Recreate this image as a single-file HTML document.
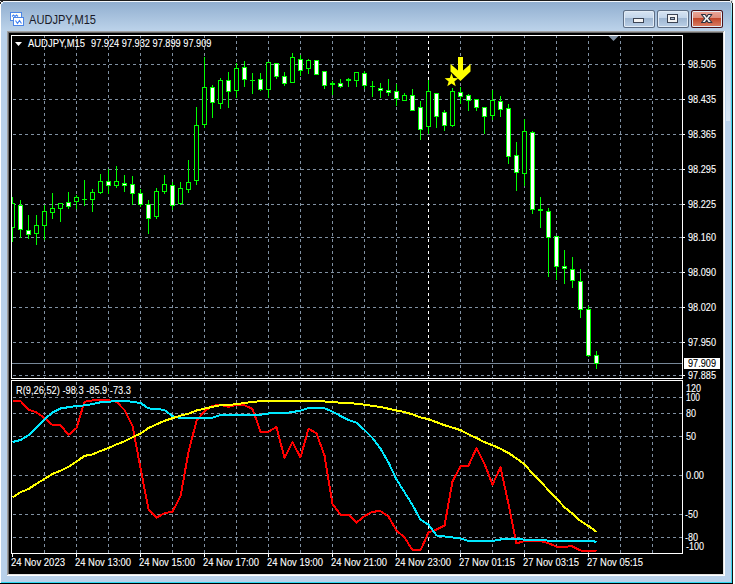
<!DOCTYPE html><html><head><meta charset="utf-8"><style>html,body{margin:0;padding:0;background:#fff;}body{width:735px;height:584px;overflow:hidden;font-family:"Liberation Sans",sans-serif;}svg{display:block;}</style></head><body><svg width="735" height="584" viewBox="0 0 735 584" shape-rendering="crispEdges">
<defs><linearGradient id="tg" x1="0" y1="0" x2="0" y2="1"><stop offset="0" stop-color="#8eacce"/><stop offset="1" stop-color="#bcd3ea"/></linearGradient><linearGradient id="bt" x1="0" y1="0" x2="0" y2="1"><stop offset="0" stop-color="#d4e2f1"/><stop offset="0.45" stop-color="#c2d5ea"/><stop offset="0.46" stop-color="#9eb6d1"/><stop offset="1" stop-color="#b8cde4"/></linearGradient><linearGradient id="ct" x1="0" y1="0" x2="0" y2="1"><stop offset="0" stop-color="#eaa496"/><stop offset="0.45" stop-color="#dc8a78"/><stop offset="0.46" stop-color="#c0462a"/><stop offset="1" stop-color="#d87a60"/></linearGradient><linearGradient id="rs" x1="0" y1="0" x2="0" y2="1"><stop offset="0" stop-color="#bcd3ea"/><stop offset="1" stop-color="#d8e6f4"/></linearGradient><linearGradient id="cg" x1="0" y1="0" x2="0" y2="1"><stop offset="0" stop-color="#c4ecf6"/><stop offset="1" stop-color="#3ed4ee"/></linearGradient><clipPath id="mc"><rect x="12" y="36" width="670" height="342"/></clipPath><clipPath id="ic"><rect x="12" y="381" width="670" height="172"/></clipPath></defs>
<rect x="0" y="0" width="735" height="584" fill="#ffffff"/>
<rect x="0" y="0" width="733" height="584" fill="#b9d1ea"/>
<rect x="0" y="0" width="733" height="31" fill="url(#tg)"/>
<rect x="3" y="0" width="727" height="1" fill="#1c1c1c"/>
<rect x="732" y="3" width="1" height="581" fill="#111111"/>
<rect x="0" y="583" width="733" height="1" fill="#000000"/>
<rect x="3" y="1" width="727" height="1" fill="#f4f8fc"/>
<rect x="0" y="4" width="1" height="579" fill="#ffffff"/>
<rect x="731" y="3" width="1" height="580" fill="#3ed4ee"/>
<rect x="731" y="3" width="1" height="24" fill="url(#cg)"/>
<rect x="1" y="582" width="731" height="1" fill="#2ed8f2"/>
<rect x="0" y="0" width="3" height="4" fill="#b9d1ea"/>
<rect x="0" y="0" width="3" height="1" fill="#1c1c1c"/>
<rect x="0" y="1" width="1" height="1" fill="#e6e6e6"/>
<rect x="0" y="2" width="1" height="2" fill="#2a2a2a"/>
<rect x="1" y="1" width="2" height="1" fill="#2a2a2a"/>
<rect x="1" y="2" width="2" height="1" fill="#f0f4f8"/>
<rect x="1" y="3" width="1" height="1" fill="#f0f4f8"/>
<rect x="730" y="0" width="3" height="3" fill="#e0e0e0"/>
<rect x="731" y="1" width="1" height="2" fill="#5a6a70"/>
<rect x="726" y="31" width="4" height="90" fill="url(#rs)"/>
<rect x="7" y="31" width="718" height="1" fill="#a0a0a0"/>
<rect x="7" y="31" width="1" height="545" fill="#a0a0a0"/>
<rect x="8" y="32" width="716" height="1" fill="#696969"/>
<rect x="8" y="32" width="1" height="543" fill="#696969"/>
<rect x="7" y="575" width="718" height="1" fill="#ffffff"/>
<rect x="724" y="31" width="1" height="545" fill="#ffffff"/>
<rect x="8" y="574" width="716" height="1" fill="#e3e3e3"/>
<rect x="723" y="32" width="1" height="543" fill="#e3e3e3"/>
<rect x="9" y="33" width="714" height="541" fill="#000000"/>
<g shape-rendering="auto">
<rect x="10.5" y="12.5" width="11" height="8" fill="#fffef6" stroke="#5a8cd8" stroke-width="1"/>
<rect x="10.5" y="12.5" width="11" height="8" fill="none" stroke="#3f80f4" stroke-width="1" stroke-dasharray="1 1"/>
<polyline points="12,16.5 13.5,15 15,16.5 16.5,15 18,16.5" fill="none" stroke="#3f80f4" stroke-width="1.1"/>
<rect x="13.5" y="17.5" width="10" height="8" fill="#ffffff" stroke="#5a8cd8" stroke-width="1"/>
<rect x="13.5" y="17.5" width="10" height="8" fill="none" stroke="#3f80f4" stroke-width="1" stroke-dasharray="1 1"/>
<polyline points="15.5,20.5 17.5,23.5 19.5,20.5 21.5,23.5" fill="none" stroke="#3f80f4" stroke-width="1.1"/>
</g>
<text x="29" y="24" font-family="Liberation Sans" font-size="12.2" fill="#1a1a28" textLength="67" lengthAdjust="spacingAndGlyphs">AUDJPY,M15</text>
<rect x="623" y="10" width="32" height="18" rx="2.5" fill="#5d6e85" shape-rendering="auto"/>
<rect x="624" y="11" width="30" height="16" rx="1.5" fill="#e2ecf6" shape-rendering="auto"/>
<rect x="625" y="12" width="28" height="14" fill="url(#bt)"/>
<rect x="657" y="10" width="32" height="18" rx="2.5" fill="#5d6e85" shape-rendering="auto"/>
<rect x="658" y="11" width="30" height="16" rx="1.5" fill="#e2ecf6" shape-rendering="auto"/>
<rect x="659" y="12" width="28" height="14" fill="url(#bt)"/>
<rect x="691" y="10" width="32" height="18" rx="2.5" fill="#4a1018" shape-rendering="auto"/>
<rect x="692" y="11" width="30" height="16" rx="1.5" fill="#e2ecf6" shape-rendering="auto"/>
<rect x="693" y="12" width="28" height="14" fill="url(#ct)"/>
<rect x="633" y="18" width="11" height="5" fill="#3c4454"/>
<rect x="634" y="19" width="9" height="3" fill="#f4f4f4"/>
<rect x="667" y="14" width="11" height="9" fill="#3c4454"/>
<rect x="668" y="15" width="9" height="7" fill="#f4f4f4"/>
<rect x="670" y="17" width="5" height="3" fill="#3c4454"/>
<rect x="671" y="18" width="3" height="1" fill="#a9b8cc"/>
<polygon shape-rendering="auto" points="701.5,14.5 705.2,14.5 706.7,16.9 708.2,14.5 711.9,14.5 708.6,18.5 711.9,22.5 708.2,22.5 706.7,20.1 705.2,22.5 701.5,22.5 704.8,18.5" fill="#f6f6f6" stroke="#2c3442" stroke-width="1.1" stroke-linejoin="round"/>
<line x1="13" y1="64.5" x2="682" y2="64.5" stroke="#8090a2" stroke-width="1" stroke-dasharray="3 3"/>
<line x1="13" y1="99.5" x2="682" y2="99.5" stroke="#8090a2" stroke-width="1" stroke-dasharray="3 3"/>
<line x1="13" y1="134.5" x2="682" y2="134.5" stroke="#8090a2" stroke-width="1" stroke-dasharray="3 3"/>
<line x1="13" y1="169.5" x2="682" y2="169.5" stroke="#8090a2" stroke-width="1" stroke-dasharray="3 3"/>
<line x1="13" y1="204.5" x2="682" y2="204.5" stroke="#8090a2" stroke-width="1" stroke-dasharray="3 3"/>
<line x1="13" y1="237.5" x2="682" y2="237.5" stroke="#8090a2" stroke-width="1" stroke-dasharray="3 3"/>
<line x1="13" y1="272.5" x2="682" y2="272.5" stroke="#8090a2" stroke-width="1" stroke-dasharray="3 3"/>
<line x1="13" y1="307.5" x2="682" y2="307.5" stroke="#8090a2" stroke-width="1" stroke-dasharray="3 3"/>
<line x1="13" y1="342.5" x2="682" y2="342.5" stroke="#8090a2" stroke-width="1" stroke-dasharray="3 3"/>
<line x1="13" y1="375.5" x2="682" y2="375.5" stroke="#8090a2" stroke-width="1" stroke-dasharray="3 3"/>
<line x1="44.5" y1="35" x2="44.5" y2="378" stroke="#8090a2" stroke-width="1" stroke-dasharray="3 3"/>
<line x1="76.5" y1="35" x2="76.5" y2="378" stroke="#8090a2" stroke-width="1" stroke-dasharray="3 3"/>
<line x1="108.5" y1="35" x2="108.5" y2="378" stroke="#8090a2" stroke-width="1" stroke-dasharray="3 3"/>
<line x1="140.5" y1="35" x2="140.5" y2="378" stroke="#8090a2" stroke-width="1" stroke-dasharray="3 3"/>
<line x1="172.5" y1="35" x2="172.5" y2="378" stroke="#8090a2" stroke-width="1" stroke-dasharray="3 3"/>
<line x1="204.5" y1="35" x2="204.5" y2="378" stroke="#8090a2" stroke-width="1" stroke-dasharray="3 3"/>
<line x1="236.5" y1="35" x2="236.5" y2="378" stroke="#8090a2" stroke-width="1" stroke-dasharray="3 3"/>
<line x1="268.5" y1="35" x2="268.5" y2="378" stroke="#8090a2" stroke-width="1" stroke-dasharray="3 3"/>
<line x1="300.5" y1="35" x2="300.5" y2="378" stroke="#8090a2" stroke-width="1" stroke-dasharray="3 3"/>
<line x1="332.5" y1="35" x2="332.5" y2="378" stroke="#8090a2" stroke-width="1" stroke-dasharray="3 3"/>
<line x1="364.5" y1="35" x2="364.5" y2="378" stroke="#8090a2" stroke-width="1" stroke-dasharray="3 3"/>
<line x1="396.5" y1="35" x2="396.5" y2="378" stroke="#8090a2" stroke-width="1" stroke-dasharray="3 3"/>
<line x1="428.5" y1="35" x2="428.5" y2="378" stroke="#ffffff" stroke-width="1" stroke-dasharray="3 3"/>
<line x1="460.5" y1="35" x2="460.5" y2="378" stroke="#8090a2" stroke-width="1" stroke-dasharray="3 3"/>
<line x1="492.5" y1="35" x2="492.5" y2="378" stroke="#8090a2" stroke-width="1" stroke-dasharray="3 3"/>
<line x1="524.5" y1="35" x2="524.5" y2="378" stroke="#8090a2" stroke-width="1" stroke-dasharray="3 3"/>
<line x1="556.5" y1="35" x2="556.5" y2="378" stroke="#8090a2" stroke-width="1" stroke-dasharray="3 3"/>
<line x1="588.5" y1="35" x2="588.5" y2="378" stroke="#8090a2" stroke-width="1" stroke-dasharray="3 3"/>
<line x1="620.5" y1="35" x2="620.5" y2="378" stroke="#8090a2" stroke-width="1" stroke-dasharray="3 3"/>
<line x1="652.5" y1="35" x2="652.5" y2="378" stroke="#8090a2" stroke-width="1" stroke-dasharray="3 3"/>
<polygon points="608.5,36 618.5,36 613.5,41" fill="#8090a2" shape-rendering="auto"/>
<rect x="12" y="363" width="670" height="1" fill="#778899"/>
<g clip-path="url(#mc)">
<rect x="12" y="197" width="1" height="45" fill="#00ff00"/>
<rect x="10" y="203" width="5" height="25" fill="#00ff00"/>
<rect x="11" y="204" width="3" height="23" fill="#000000"/>
<rect x="20" y="200" width="1" height="38" fill="#00ff00"/>
<rect x="18" y="205" width="5" height="25" fill="#00ff00"/>
<rect x="19" y="206" width="3" height="23" fill="#ffffff"/>
<rect x="28" y="215" width="1" height="24" fill="#00ff00"/>
<rect x="26" y="230" width="5" height="5" fill="#00ff00"/>
<rect x="27" y="231" width="3" height="3" fill="#ffffff"/>
<rect x="36" y="215" width="1" height="30" fill="#00ff00"/>
<rect x="34" y="225" width="5" height="9" fill="#00ff00"/>
<rect x="35" y="226" width="3" height="7" fill="#000000"/>
<rect x="44" y="205" width="1" height="35" fill="#00ff00"/>
<rect x="42" y="211" width="5" height="15" fill="#00ff00"/>
<rect x="43" y="212" width="3" height="13" fill="#000000"/>
<rect x="52" y="193" width="1" height="26" fill="#00ff00"/>
<rect x="50" y="208" width="5" height="5" fill="#00ff00"/>
<rect x="51" y="209" width="3" height="3" fill="#000000"/>
<rect x="60" y="203" width="1" height="19" fill="#00ff00"/>
<rect x="58" y="203" width="5" height="6" fill="#00ff00"/>
<rect x="59" y="204" width="3" height="4" fill="#000000"/>
<rect x="68" y="192" width="1" height="17" fill="#00ff00"/>
<rect x="66" y="202" width="5" height="5" fill="#00ff00"/>
<rect x="67" y="203" width="3" height="3" fill="#ffffff"/>
<rect x="76" y="195" width="1" height="14" fill="#00ff00"/>
<rect x="74" y="197" width="5" height="5" fill="#00ff00"/>
<rect x="75" y="198" width="3" height="3" fill="#000000"/>
<rect x="84" y="180" width="1" height="26" fill="#00ff00"/>
<rect x="82" y="199" width="5" height="1" fill="#00ff00"/>
<rect x="92" y="189" width="1" height="23" fill="#00ff00"/>
<rect x="90" y="192" width="5" height="8" fill="#00ff00"/>
<rect x="91" y="193" width="3" height="6" fill="#000000"/>
<rect x="100" y="174" width="1" height="20" fill="#00ff00"/>
<rect x="98" y="181" width="5" height="12" fill="#00ff00"/>
<rect x="99" y="182" width="3" height="10" fill="#000000"/>
<rect x="108" y="169" width="1" height="25" fill="#00ff00"/>
<rect x="106" y="181" width="5" height="5" fill="#00ff00"/>
<rect x="107" y="182" width="3" height="3" fill="#ffffff"/>
<rect x="116" y="166" width="1" height="22" fill="#00ff00"/>
<rect x="114" y="181" width="5" height="5" fill="#00ff00"/>
<rect x="115" y="182" width="3" height="3" fill="#000000"/>
<rect x="124" y="175" width="1" height="17" fill="#00ff00"/>
<rect x="122" y="183" width="5" height="3" fill="#00ff00"/>
<rect x="123" y="184" width="3" height="1" fill="#ffffff"/>
<rect x="132" y="176" width="1" height="29" fill="#00ff00"/>
<rect x="130" y="184" width="5" height="10" fill="#00ff00"/>
<rect x="131" y="185" width="3" height="8" fill="#ffffff"/>
<rect x="140" y="189" width="1" height="18" fill="#00ff00"/>
<rect x="138" y="193" width="5" height="12" fill="#00ff00"/>
<rect x="139" y="194" width="3" height="10" fill="#ffffff"/>
<rect x="148" y="200" width="1" height="34" fill="#00ff00"/>
<rect x="146" y="204" width="5" height="15" fill="#00ff00"/>
<rect x="147" y="205" width="3" height="13" fill="#ffffff"/>
<rect x="156" y="188" width="1" height="31" fill="#00ff00"/>
<rect x="154" y="191" width="5" height="26" fill="#00ff00"/>
<rect x="155" y="192" width="3" height="24" fill="#000000"/>
<rect x="164" y="175" width="1" height="19" fill="#00ff00"/>
<rect x="162" y="184" width="5" height="8" fill="#00ff00"/>
<rect x="163" y="185" width="3" height="6" fill="#000000"/>
<rect x="172" y="182" width="1" height="28" fill="#00ff00"/>
<rect x="170" y="185" width="5" height="21" fill="#00ff00"/>
<rect x="171" y="186" width="3" height="19" fill="#ffffff"/>
<rect x="180" y="182" width="1" height="23" fill="#00ff00"/>
<rect x="178" y="188" width="5" height="16" fill="#00ff00"/>
<rect x="179" y="189" width="3" height="14" fill="#000000"/>
<rect x="188" y="160" width="1" height="33" fill="#00ff00"/>
<rect x="186" y="182" width="5" height="8" fill="#00ff00"/>
<rect x="187" y="183" width="3" height="6" fill="#000000"/>
<rect x="196" y="107" width="1" height="78" fill="#00ff00"/>
<rect x="194" y="125" width="5" height="56" fill="#00ff00"/>
<rect x="195" y="126" width="3" height="54" fill="#000000"/>
<rect x="204" y="57" width="1" height="71" fill="#00ff00"/>
<rect x="202" y="87" width="5" height="38" fill="#00ff00"/>
<rect x="203" y="88" width="3" height="36" fill="#000000"/>
<rect x="212" y="85" width="1" height="33" fill="#00ff00"/>
<rect x="210" y="87" width="5" height="16" fill="#00ff00"/>
<rect x="211" y="88" width="3" height="14" fill="#ffffff"/>
<rect x="220" y="78" width="1" height="31" fill="#00ff00"/>
<rect x="218" y="80" width="5" height="24" fill="#00ff00"/>
<rect x="219" y="81" width="3" height="22" fill="#000000"/>
<rect x="228" y="72" width="1" height="36" fill="#00ff00"/>
<rect x="226" y="80" width="5" height="12" fill="#00ff00"/>
<rect x="227" y="81" width="3" height="10" fill="#ffffff"/>
<rect x="236" y="63" width="1" height="35" fill="#00ff00"/>
<rect x="234" y="68" width="5" height="23" fill="#00ff00"/>
<rect x="235" y="69" width="3" height="21" fill="#000000"/>
<rect x="244" y="61" width="1" height="26" fill="#00ff00"/>
<rect x="242" y="67" width="5" height="13" fill="#00ff00"/>
<rect x="243" y="68" width="3" height="11" fill="#ffffff"/>
<rect x="252" y="73" width="1" height="21" fill="#00ff00"/>
<rect x="250" y="80" width="5" height="1" fill="#00ff00"/>
<rect x="260" y="73" width="1" height="18" fill="#00ff00"/>
<rect x="258" y="79" width="5" height="11" fill="#00ff00"/>
<rect x="259" y="80" width="3" height="9" fill="#ffffff"/>
<rect x="268" y="62" width="1" height="36" fill="#00ff00"/>
<rect x="266" y="62" width="5" height="28" fill="#00ff00"/>
<rect x="267" y="63" width="3" height="26" fill="#000000"/>
<rect x="276" y="63" width="1" height="16" fill="#00ff00"/>
<rect x="274" y="63" width="5" height="14" fill="#00ff00"/>
<rect x="275" y="64" width="3" height="12" fill="#ffffff"/>
<rect x="284" y="72" width="1" height="14" fill="#00ff00"/>
<rect x="282" y="76" width="5" height="8" fill="#00ff00"/>
<rect x="283" y="77" width="3" height="6" fill="#ffffff"/>
<rect x="292" y="53" width="1" height="30" fill="#00ff00"/>
<rect x="290" y="57" width="5" height="26" fill="#00ff00"/>
<rect x="291" y="58" width="3" height="24" fill="#000000"/>
<rect x="300" y="55" width="1" height="21" fill="#00ff00"/>
<rect x="298" y="59" width="5" height="12" fill="#00ff00"/>
<rect x="299" y="60" width="3" height="10" fill="#ffffff"/>
<rect x="308" y="59" width="1" height="15" fill="#00ff00"/>
<rect x="306" y="60" width="5" height="9" fill="#00ff00"/>
<rect x="307" y="61" width="3" height="7" fill="#000000"/>
<rect x="316" y="60" width="1" height="15" fill="#00ff00"/>
<rect x="314" y="60" width="5" height="15" fill="#00ff00"/>
<rect x="315" y="61" width="3" height="13" fill="#ffffff"/>
<rect x="324" y="71" width="1" height="18" fill="#00ff00"/>
<rect x="322" y="71" width="5" height="15" fill="#00ff00"/>
<rect x="323" y="72" width="3" height="13" fill="#ffffff"/>
<rect x="332" y="81" width="1" height="14" fill="#00ff00"/>
<rect x="330" y="83" width="5" height="2" fill="#00ff00"/>
<rect x="340" y="79" width="1" height="9" fill="#00ff00"/>
<rect x="338" y="83" width="5" height="4" fill="#00ff00"/>
<rect x="339" y="84" width="3" height="2" fill="#ffffff"/>
<rect x="348" y="78" width="1" height="9" fill="#00ff00"/>
<rect x="346" y="79" width="5" height="2" fill="#00ff00"/>
<rect x="356" y="72" width="1" height="15" fill="#00ff00"/>
<rect x="354" y="72" width="5" height="9" fill="#00ff00"/>
<rect x="355" y="73" width="3" height="7" fill="#000000"/>
<rect x="364" y="71" width="1" height="18" fill="#00ff00"/>
<rect x="362" y="73" width="5" height="13" fill="#00ff00"/>
<rect x="363" y="74" width="3" height="11" fill="#ffffff"/>
<rect x="372" y="81" width="1" height="16" fill="#00ff00"/>
<rect x="370" y="86" width="5" height="1" fill="#00ff00"/>
<rect x="380" y="83" width="1" height="15" fill="#00ff00"/>
<rect x="378" y="88" width="5" height="3" fill="#00ff00"/>
<rect x="379" y="89" width="3" height="1" fill="#ffffff"/>
<rect x="388" y="79" width="1" height="17" fill="#00ff00"/>
<rect x="386" y="90" width="5" height="3" fill="#00ff00"/>
<rect x="387" y="91" width="3" height="1" fill="#ffffff"/>
<rect x="396" y="84" width="1" height="22" fill="#00ff00"/>
<rect x="394" y="91" width="5" height="8" fill="#00ff00"/>
<rect x="395" y="92" width="3" height="6" fill="#ffffff"/>
<rect x="404" y="93" width="1" height="8" fill="#00ff00"/>
<rect x="402" y="95" width="5" height="6" fill="#00ff00"/>
<rect x="403" y="96" width="3" height="4" fill="#000000"/>
<rect x="412" y="89" width="1" height="22" fill="#00ff00"/>
<rect x="410" y="95" width="5" height="16" fill="#00ff00"/>
<rect x="411" y="96" width="3" height="14" fill="#ffffff"/>
<rect x="420" y="101" width="1" height="39" fill="#00ff00"/>
<rect x="418" y="107" width="5" height="23" fill="#00ff00"/>
<rect x="419" y="108" width="3" height="21" fill="#ffffff"/>
<rect x="428" y="80" width="1" height="54" fill="#00ff00"/>
<rect x="426" y="91" width="5" height="36" fill="#00ff00"/>
<rect x="427" y="92" width="3" height="34" fill="#000000"/>
<rect x="436" y="93" width="1" height="35" fill="#00ff00"/>
<rect x="434" y="93" width="5" height="24" fill="#00ff00"/>
<rect x="435" y="94" width="3" height="22" fill="#ffffff"/>
<rect x="444" y="110" width="1" height="21" fill="#00ff00"/>
<rect x="442" y="112" width="5" height="14" fill="#00ff00"/>
<rect x="443" y="113" width="3" height="12" fill="#ffffff"/>
<rect x="452" y="88" width="1" height="39" fill="#00ff00"/>
<rect x="450" y="91" width="5" height="35" fill="#00ff00"/>
<rect x="451" y="92" width="3" height="33" fill="#000000"/>
<rect x="460" y="87" width="1" height="17" fill="#00ff00"/>
<rect x="458" y="92" width="5" height="5" fill="#00ff00"/>
<rect x="459" y="93" width="3" height="3" fill="#ffffff"/>
<rect x="468" y="94" width="1" height="17" fill="#00ff00"/>
<rect x="466" y="95" width="5" height="6" fill="#00ff00"/>
<rect x="467" y="96" width="3" height="4" fill="#ffffff"/>
<rect x="476" y="99" width="1" height="12" fill="#00ff00"/>
<rect x="474" y="99" width="5" height="9" fill="#00ff00"/>
<rect x="475" y="100" width="3" height="7" fill="#ffffff"/>
<rect x="484" y="107" width="1" height="27" fill="#00ff00"/>
<rect x="482" y="107" width="5" height="10" fill="#00ff00"/>
<rect x="483" y="108" width="3" height="8" fill="#ffffff"/>
<rect x="492" y="90" width="1" height="30" fill="#00ff00"/>
<rect x="490" y="100" width="5" height="16" fill="#00ff00"/>
<rect x="491" y="101" width="3" height="14" fill="#000000"/>
<rect x="500" y="96" width="1" height="21" fill="#00ff00"/>
<rect x="498" y="101" width="5" height="9" fill="#00ff00"/>
<rect x="499" y="102" width="3" height="7" fill="#ffffff"/>
<rect x="508" y="104" width="1" height="60" fill="#00ff00"/>
<rect x="506" y="108" width="5" height="49" fill="#00ff00"/>
<rect x="507" y="109" width="3" height="47" fill="#ffffff"/>
<rect x="516" y="142" width="1" height="49" fill="#00ff00"/>
<rect x="514" y="155" width="5" height="18" fill="#00ff00"/>
<rect x="515" y="156" width="3" height="16" fill="#ffffff"/>
<rect x="524" y="119" width="1" height="67" fill="#00ff00"/>
<rect x="522" y="131" width="5" height="43" fill="#00ff00"/>
<rect x="523" y="132" width="3" height="41" fill="#000000"/>
<rect x="532" y="131" width="1" height="83" fill="#00ff00"/>
<rect x="530" y="132" width="5" height="78" fill="#00ff00"/>
<rect x="531" y="133" width="3" height="76" fill="#ffffff"/>
<rect x="540" y="197" width="1" height="31" fill="#00ff00"/>
<rect x="538" y="209" width="5" height="2" fill="#00ff00"/>
<rect x="548" y="208" width="1" height="69" fill="#00ff00"/>
<rect x="546" y="211" width="5" height="27" fill="#00ff00"/>
<rect x="547" y="212" width="3" height="25" fill="#ffffff"/>
<rect x="556" y="236" width="1" height="44" fill="#00ff00"/>
<rect x="554" y="236" width="5" height="31" fill="#00ff00"/>
<rect x="555" y="237" width="3" height="29" fill="#ffffff"/>
<rect x="564" y="250" width="1" height="34" fill="#00ff00"/>
<rect x="562" y="266" width="5" height="3" fill="#00ff00"/>
<rect x="563" y="267" width="3" height="1" fill="#ffffff"/>
<rect x="572" y="257" width="1" height="31" fill="#00ff00"/>
<rect x="570" y="269" width="5" height="12" fill="#00ff00"/>
<rect x="571" y="270" width="3" height="10" fill="#ffffff"/>
<rect x="580" y="269" width="1" height="49" fill="#00ff00"/>
<rect x="578" y="281" width="5" height="29" fill="#00ff00"/>
<rect x="579" y="282" width="3" height="27" fill="#ffffff"/>
<rect x="588" y="306" width="1" height="51" fill="#00ff00"/>
<rect x="586" y="309" width="5" height="47" fill="#00ff00"/>
<rect x="587" y="310" width="3" height="45" fill="#ffffff"/>
<rect x="596" y="351" width="1" height="18" fill="#00ff00"/>
<rect x="594" y="355" width="5" height="9" fill="#00ff00"/>
<rect x="595" y="356" width="3" height="7" fill="#ffffff"/>
</g>
<g shape-rendering="auto">
<polygon points="451.50,73.30 453.26,78.07 458.35,78.28 454.35,81.43 455.73,86.32 451.50,83.50 447.27,86.32 448.65,81.43 444.65,78.28 449.74,78.07" fill="#ffff00"/>
<polygon points="458,57 463,57 463,70.5 470.5,64 470.5,71.5 460.5,81 450.5,71.5 450.5,64 458,70.5" fill="#ffff00"/>
</g>
<rect x="11.5" y="35.5" width="671" height="343" fill="none" stroke="#ffffff" stroke-width="1"/>
<rect x="683" y="64" width="2" height="1" fill="#ffffff"/>
<text x="688" y="68" font-family="Liberation Sans" font-size="10.1" fill="#ffffff" stroke="#ffffff" stroke-width="0.1" textLength="28" lengthAdjust="spacingAndGlyphs">98.505</text>
<rect x="683" y="99" width="2" height="1" fill="#ffffff"/>
<text x="688" y="103" font-family="Liberation Sans" font-size="10.1" fill="#ffffff" stroke="#ffffff" stroke-width="0.1" textLength="28" lengthAdjust="spacingAndGlyphs">98.435</text>
<rect x="683" y="134" width="2" height="1" fill="#ffffff"/>
<text x="688" y="138" font-family="Liberation Sans" font-size="10.1" fill="#ffffff" stroke="#ffffff" stroke-width="0.1" textLength="28" lengthAdjust="spacingAndGlyphs">98.365</text>
<rect x="683" y="169" width="2" height="1" fill="#ffffff"/>
<text x="688" y="173" font-family="Liberation Sans" font-size="10.1" fill="#ffffff" stroke="#ffffff" stroke-width="0.1" textLength="28" lengthAdjust="spacingAndGlyphs">98.295</text>
<rect x="683" y="204" width="2" height="1" fill="#ffffff"/>
<text x="688" y="208" font-family="Liberation Sans" font-size="10.1" fill="#ffffff" stroke="#ffffff" stroke-width="0.1" textLength="28" lengthAdjust="spacingAndGlyphs">98.225</text>
<rect x="683" y="237" width="2" height="1" fill="#ffffff"/>
<text x="688" y="241" font-family="Liberation Sans" font-size="10.1" fill="#ffffff" stroke="#ffffff" stroke-width="0.1" textLength="28" lengthAdjust="spacingAndGlyphs">98.160</text>
<rect x="683" y="272" width="2" height="1" fill="#ffffff"/>
<text x="688" y="276" font-family="Liberation Sans" font-size="10.1" fill="#ffffff" stroke="#ffffff" stroke-width="0.1" textLength="28" lengthAdjust="spacingAndGlyphs">98.090</text>
<rect x="683" y="307" width="2" height="1" fill="#ffffff"/>
<text x="688" y="311" font-family="Liberation Sans" font-size="10.1" fill="#ffffff" stroke="#ffffff" stroke-width="0.1" textLength="28" lengthAdjust="spacingAndGlyphs">98.020</text>
<rect x="683" y="342" width="2" height="1" fill="#ffffff"/>
<text x="688" y="346" font-family="Liberation Sans" font-size="10.1" fill="#ffffff" stroke="#ffffff" stroke-width="0.1" textLength="28" lengthAdjust="spacingAndGlyphs">97.950</text>
<rect x="683" y="375" width="2" height="1" fill="#ffffff"/>
<text x="688" y="379" font-family="Liberation Sans" font-size="10.1" fill="#ffffff" stroke="#ffffff" stroke-width="0.1" textLength="28" lengthAdjust="spacingAndGlyphs">97.885</text>
<rect x="684" y="358" width="36" height="11" fill="#ffffff"/>
<text x="688" y="367" font-family="Liberation Sans" font-size="10.1" fill="#000000" stroke="#000000" stroke-width="0.1" textLength="28" lengthAdjust="spacingAndGlyphs">97.909</text>
<polygon points="15,42 22,42 18.5,46" fill="#ffffff" shape-rendering="auto"/>
<text x="28" y="47" font-family="Liberation Sans" font-size="10.1" fill="#ffffff" stroke="#ffffff" stroke-width="0.1" textLength="57" lengthAdjust="spacingAndGlyphs">AUDJPY,M15</text>
<text x="91" y="47" font-family="Liberation Sans" font-size="10.1" fill="#ffffff" stroke="#ffffff" stroke-width="0.1" textLength="120.5" lengthAdjust="spacingAndGlyphs">97.924&#160;97.932&#160;97.899&#160;97.909</text>
<line x1="13" y1="397.5" x2="682" y2="397.5" stroke="#8090a2" stroke-width="1" stroke-dasharray="3 3"/>
<line x1="13" y1="413.5" x2="682" y2="413.5" stroke="#8090a2" stroke-width="1" stroke-dasharray="3 3"/>
<line x1="13" y1="436.5" x2="682" y2="436.5" stroke="#8090a2" stroke-width="1" stroke-dasharray="3 3"/>
<line x1="13" y1="475.5" x2="682" y2="475.5" stroke="#8090a2" stroke-width="1" stroke-dasharray="3 3"/>
<line x1="13" y1="514.5" x2="682" y2="514.5" stroke="#8090a2" stroke-width="1" stroke-dasharray="3 3"/>
<line x1="13" y1="537.5" x2="682" y2="537.5" stroke="#8090a2" stroke-width="1" stroke-dasharray="3 3"/>
<line x1="44.5" y1="382" x2="44.5" y2="553" stroke="#8090a2" stroke-width="1" stroke-dasharray="3 3"/>
<line x1="76.5" y1="382" x2="76.5" y2="553" stroke="#8090a2" stroke-width="1" stroke-dasharray="3 3"/>
<line x1="108.5" y1="382" x2="108.5" y2="553" stroke="#8090a2" stroke-width="1" stroke-dasharray="3 3"/>
<line x1="140.5" y1="382" x2="140.5" y2="553" stroke="#8090a2" stroke-width="1" stroke-dasharray="3 3"/>
<line x1="172.5" y1="382" x2="172.5" y2="553" stroke="#8090a2" stroke-width="1" stroke-dasharray="3 3"/>
<line x1="204.5" y1="382" x2="204.5" y2="553" stroke="#8090a2" stroke-width="1" stroke-dasharray="3 3"/>
<line x1="236.5" y1="382" x2="236.5" y2="553" stroke="#8090a2" stroke-width="1" stroke-dasharray="3 3"/>
<line x1="268.5" y1="382" x2="268.5" y2="553" stroke="#8090a2" stroke-width="1" stroke-dasharray="3 3"/>
<line x1="300.5" y1="382" x2="300.5" y2="553" stroke="#8090a2" stroke-width="1" stroke-dasharray="3 3"/>
<line x1="332.5" y1="382" x2="332.5" y2="553" stroke="#8090a2" stroke-width="1" stroke-dasharray="3 3"/>
<line x1="364.5" y1="382" x2="364.5" y2="553" stroke="#8090a2" stroke-width="1" stroke-dasharray="3 3"/>
<line x1="396.5" y1="382" x2="396.5" y2="553" stroke="#8090a2" stroke-width="1" stroke-dasharray="3 3"/>
<line x1="428.5" y1="382" x2="428.5" y2="553" stroke="#ffffff" stroke-width="1" stroke-dasharray="3 3"/>
<line x1="460.5" y1="382" x2="460.5" y2="553" stroke="#8090a2" stroke-width="1" stroke-dasharray="3 3"/>
<line x1="492.5" y1="382" x2="492.5" y2="553" stroke="#8090a2" stroke-width="1" stroke-dasharray="3 3"/>
<line x1="524.5" y1="382" x2="524.5" y2="553" stroke="#8090a2" stroke-width="1" stroke-dasharray="3 3"/>
<line x1="556.5" y1="382" x2="556.5" y2="553" stroke="#8090a2" stroke-width="1" stroke-dasharray="3 3"/>
<line x1="588.5" y1="382" x2="588.5" y2="553" stroke="#8090a2" stroke-width="1" stroke-dasharray="3 3"/>
<line x1="620.5" y1="382" x2="620.5" y2="553" stroke="#8090a2" stroke-width="1" stroke-dasharray="3 3"/>
<line x1="652.5" y1="382" x2="652.5" y2="553" stroke="#8090a2" stroke-width="1" stroke-dasharray="3 3"/>
<g clip-path="url(#ic)" shape-rendering="crispEdges" fill="none" stroke-width="2" stroke-linejoin="round">
<polyline points="12.5,401.0 20.5,401.0 28.5,409.5 36.5,412.5 44.5,418.0 52.5,425.0 60.5,425.0 68.5,435.0 76.5,428.0 84.5,401.8 92.5,400.4 100.5,399.7 108.5,400.2 116.5,401.8 124.5,410.0 132.5,426.0 140.5,468.0 148.5,509.3 156.5,517.8 164.5,513.2 172.5,511.6 180.5,496.2 188.5,452.0 196.5,421.0 204.5,411.0 212.5,405.9 220.5,404.8 228.5,406.9 236.5,404.8 244.5,405.2 252.5,409.0 260.5,431.6 268.5,431.7 276.5,427.0 284.5,458.1 292.5,442.1 300.5,457.4 308.5,428.7 316.5,433.4 324.5,455.5 332.5,504.0 340.5,514.8 348.5,514.8 356.5,522.6 364.5,516.1 372.5,511.7 380.5,511.2 388.5,516.5 396.5,530.6 404.5,537.4 412.5,550.2 420.5,550.2 428.5,532.5 436.5,529.6 444.5,525.6 452.5,481.3 460.5,466.5 468.5,465.6 476.5,448.2 484.5,463.8 492.5,484.6 500.5,467.4 508.5,504.0 516.5,543.5 524.5,541.0 532.5,541.0 540.5,541.0 548.5,543.2 556.5,546.6 564.5,546.6 572.5,546.4 580.5,550.5 588.5,550.5 596.5,550.8" stroke="#ff0000"/>
<polyline points="12.5,442.0 20.5,440.0 28.5,435.2 36.5,427.5 44.5,419.2 52.5,412.6 60.5,408.4 68.5,407.2 76.5,406.0 84.5,405.4 92.5,404.1 100.5,402.3 108.5,401.8 116.5,401.0 124.5,401.0 132.5,401.8 140.5,403.0 148.5,408.4 156.5,409.0 164.5,410.0 172.5,416.2 180.5,418.2 188.5,418.2 196.5,418.2 204.5,418.0 212.5,417.7 220.5,415.1 228.5,414.8 236.5,414.8 244.5,414.8 252.5,414.8 260.5,414.8 268.5,413.5 276.5,413.1 284.5,413.1 292.5,412.0 300.5,410.7 308.5,408.0 316.5,408.0 324.5,408.3 332.5,411.6 340.5,416.0 348.5,420.0 356.5,422.7 364.5,430.0 372.5,438.0 380.5,448.7 388.5,462.5 396.5,479.4 404.5,492.2 412.5,505.0 420.5,519.7 428.5,524.6 436.5,535.5 444.5,536.5 452.5,537.4 460.5,538.4 468.5,541.0 476.5,541.0 484.5,541.0 492.5,541.0 500.5,539.5 508.5,538.8 516.5,538.8 524.5,539.7 532.5,540.0 540.5,540.0 548.5,540.6 556.5,540.6 564.5,540.6 572.5,540.6 580.5,540.6 588.5,540.6 596.5,541.8" stroke="#00e8ff"/>
<polyline points="12.5,497.4 20.5,492.2 28.5,489.0 36.5,483.7 44.5,478.9 52.5,474.0 60.5,470.7 68.5,466.8 76.5,461.5 84.5,455.9 92.5,454.4 100.5,451.0 108.5,448.0 116.5,444.4 124.5,441.3 132.5,437.2 140.5,433.5 148.5,428.0 156.5,424.4 164.5,420.8 172.5,418.2 180.5,415.6 188.5,413.6 196.5,410.5 204.5,408.6 212.5,406.9 220.5,405.2 228.5,404.8 236.5,404.3 244.5,402.8 252.5,402.1 260.5,401.0 268.5,400.9 276.5,401.1 284.5,401.1 292.5,401.1 300.5,401.1 308.5,401.1 316.5,401.1 324.5,401.5 332.5,402.0 340.5,402.7 348.5,403.1 356.5,403.7 364.5,404.7 372.5,405.8 380.5,407.0 388.5,408.7 396.5,410.5 404.5,412.0 412.5,414.4 420.5,417.4 428.5,419.2 436.5,422.2 444.5,425.2 452.5,427.6 460.5,430.1 468.5,434.3 476.5,438.0 484.5,442.2 492.5,445.2 500.5,448.8 508.5,453.0 516.5,458.4 524.5,464.4 532.5,473.5 540.5,481.6 548.5,490.2 556.5,498.5 564.5,507.3 572.5,513.7 580.5,521.0 588.5,526.0 596.5,531.9" stroke="#ffff00"/>
</g>
<rect x="11.5" y="380.5" width="671" height="173" fill="none" stroke="#ffffff" stroke-width="1"/>
<text x="16" y="394" font-family="Liberation Sans" font-size="10.1" fill="#ffffff" stroke="#ffffff" stroke-width="0.1" textLength="115" lengthAdjust="spacingAndGlyphs">R(9,26,52)&#160;-98.3&#160;-85.9&#160;-73.3</text>
<text x="686" y="392" font-family="Liberation Sans" font-size="10.1" fill="#ffffff" stroke="#ffffff" stroke-width="0.1" textLength="15" lengthAdjust="spacingAndGlyphs">120</text>
<text x="686" y="401" font-family="Liberation Sans" font-size="10.1" fill="#ffffff" stroke="#ffffff" stroke-width="0.1" textLength="14" lengthAdjust="spacingAndGlyphs">100</text>
<text x="686" y="417" font-family="Liberation Sans" font-size="10.1" fill="#ffffff" stroke="#ffffff" stroke-width="0.1" textLength="10" lengthAdjust="spacingAndGlyphs">80</text>
<text x="686" y="440" font-family="Liberation Sans" font-size="10.1" fill="#ffffff" stroke="#ffffff" stroke-width="0.1" textLength="10" lengthAdjust="spacingAndGlyphs">50</text>
<text x="686" y="479" font-family="Liberation Sans" font-size="10.1" fill="#ffffff" stroke="#ffffff" stroke-width="0.1" textLength="18" lengthAdjust="spacingAndGlyphs">0.00</text>
<text x="685" y="518" font-family="Liberation Sans" font-size="10.1" fill="#ffffff" stroke="#ffffff" stroke-width="0.1" textLength="13" lengthAdjust="spacingAndGlyphs">-50</text>
<text x="685" y="541" font-family="Liberation Sans" font-size="10.1" fill="#ffffff" stroke="#ffffff" stroke-width="0.1" textLength="13" lengthAdjust="spacingAndGlyphs">-80</text>
<text x="686" y="550" font-family="Liberation Sans" font-size="10.1" fill="#ffffff" stroke="#ffffff" stroke-width="0.1" textLength="18" lengthAdjust="spacingAndGlyphs">-100</text>
<rect x="12" y="554" width="1" height="3" fill="#ffffff"/>
<text x="11" y="566" font-family="Liberation Sans" font-size="10.1" fill="#ffffff" stroke="#ffffff" stroke-width="0.1" textLength="54" lengthAdjust="spacingAndGlyphs">24&#160;Nov&#160;2023</text>
<rect x="76" y="554" width="1" height="3" fill="#ffffff"/>
<text x="75" y="566" font-family="Liberation Sans" font-size="10.1" fill="#ffffff" stroke="#ffffff" stroke-width="0.1" textLength="56" lengthAdjust="spacingAndGlyphs">24&#160;Nov&#160;13:00</text>
<rect x="140" y="554" width="1" height="3" fill="#ffffff"/>
<text x="139" y="566" font-family="Liberation Sans" font-size="10.1" fill="#ffffff" stroke="#ffffff" stroke-width="0.1" textLength="56" lengthAdjust="spacingAndGlyphs">24&#160;Nov&#160;15:00</text>
<rect x="204" y="554" width="1" height="3" fill="#ffffff"/>
<text x="203" y="566" font-family="Liberation Sans" font-size="10.1" fill="#ffffff" stroke="#ffffff" stroke-width="0.1" textLength="56" lengthAdjust="spacingAndGlyphs">24&#160;Nov&#160;17:00</text>
<rect x="268" y="554" width="1" height="3" fill="#ffffff"/>
<text x="267" y="566" font-family="Liberation Sans" font-size="10.1" fill="#ffffff" stroke="#ffffff" stroke-width="0.1" textLength="56" lengthAdjust="spacingAndGlyphs">24&#160;Nov&#160;19:00</text>
<rect x="332" y="554" width="1" height="3" fill="#ffffff"/>
<text x="331" y="566" font-family="Liberation Sans" font-size="10.1" fill="#ffffff" stroke="#ffffff" stroke-width="0.1" textLength="56" lengthAdjust="spacingAndGlyphs">24&#160;Nov&#160;21:00</text>
<rect x="396" y="554" width="1" height="3" fill="#ffffff"/>
<text x="395" y="566" font-family="Liberation Sans" font-size="10.1" fill="#ffffff" stroke="#ffffff" stroke-width="0.1" textLength="56" lengthAdjust="spacingAndGlyphs">24&#160;Nov&#160;23:00</text>
<rect x="460" y="554" width="1" height="3" fill="#ffffff"/>
<text x="459" y="566" font-family="Liberation Sans" font-size="10.1" fill="#ffffff" stroke="#ffffff" stroke-width="0.1" textLength="56" lengthAdjust="spacingAndGlyphs">27&#160;Nov&#160;01:15</text>
<rect x="524" y="554" width="1" height="3" fill="#ffffff"/>
<text x="523" y="566" font-family="Liberation Sans" font-size="10.1" fill="#ffffff" stroke="#ffffff" stroke-width="0.1" textLength="56" lengthAdjust="spacingAndGlyphs">27&#160;Nov&#160;03:15</text>
<rect x="588" y="554" width="1" height="3" fill="#ffffff"/>
<text x="587" y="566" font-family="Liberation Sans" font-size="10.1" fill="#ffffff" stroke="#ffffff" stroke-width="0.1" textLength="56" lengthAdjust="spacingAndGlyphs">27&#160;Nov&#160;05:15</text>
</svg></body></html>
